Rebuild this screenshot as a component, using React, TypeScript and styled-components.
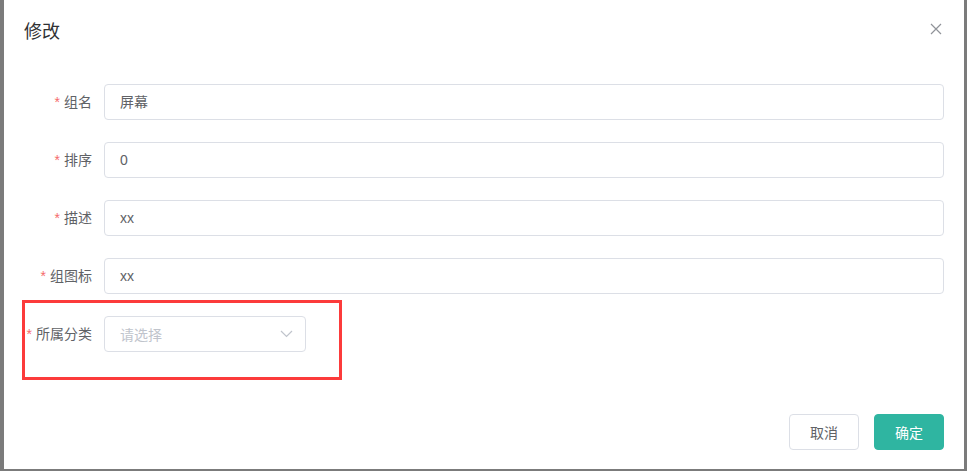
import styled, { createGlobalStyle } from "styled-components"

const GlobalStyle = createGlobalStyle`
    html, body {
        margin: 0;
        padding: 0;
        background: #7b7b7b;
        font-family: "Liberation Sans", "Noto Sans CJK SC", sans-serif;
    }
`

const fields = [
    { label: "组名", value: "屏幕" },
    { label: "排序", value: "0" },
    { label: "描述", value: "xx" },
    { label: "组图标", value: "xx" },
]

function App() {
    return (
        <>
            <GlobalStyle />
            <Overlay>
                <Dialog>
                    <Header>
                        <Title>修改</Title>
                        <CloseButton aria-label="close">
                            <svg width="12" height="12" viewBox="0 0 12 12">
                                <path d="M1 1L11 11M11 1L1 11" stroke="#909399" strokeWidth="1.2" />
                            </svg>
                        </CloseButton>
                    </Header>
                    <Body>
                        {fields.map((f) => (
                            <FormItem key={f.label}>
                                <Label><Star>*</Star>{f.label}</Label>
                                <Input>{f.value}</Input>
                            </FormItem>
                        ))}
                        <FormItem>
                            <Highlight />
                            <Label><Star>*</Star>所属分类</Label>
                            <Select>
                                <Placeholder>请选择</Placeholder>
                                <svg width="13" height="8" viewBox="0 0 13 8">
                                    <path d="M1 1L6.5 6.5L12 1" fill="none" stroke="#c0c4cc" strokeWidth="1.2" />
                                </svg>
                            </Select>
                        </FormItem>
                    </Body>
                    <Footer>
                        <Button>取消</Button>
                        <Button primary>确定</Button>
                    </Footer>
                </Dialog>
            </Overlay>
        </>
    )
}

const Overlay = styled.div`
    padding-left: 4px;
    width: 963px;
    height: 471px;
    box-sizing: border-box;
`

const Dialog = styled.div`
    width: 960px;
    height: 469px;
    background: #fff;
    display: flex;
    flex-direction: column;
`

const Header = styled.div`
    position: relative;
    padding: 20px 20px 10px;
`

const Title = styled.span`
    font-size: 18px;
    line-height: 24px;
    color: #303133;
`

const CloseButton = styled.button`
    position: absolute;
    top: 23px;
    right: 22px;
    padding: 0;
    border: none;
    background: none;
    display: flex;
`

const Body = styled.div`
    padding: 30px 20px;
`

const FormItem = styled.div`
    position: relative;
    display: flex;
    align-items: center;
    margin-bottom: 22px;
    &:last-child {
        margin-bottom: 0;
    }
`

const Highlight = styled.div`
    position: absolute;
    left: -2px;
    top: -16px;
    width: 320px;
    height: 80px;
    box-sizing: border-box;
    border: 3px solid #fc3b3b;
    pointer-events: none;
`

const Label = styled.label`
    width: 80px;
    padding-right: 12px;
    box-sizing: border-box;
    text-align: right;
    font-size: 14px;
    line-height: 36px;
    color: #606266;
`

const Star = styled.span`
    color: #f56c6c;
    margin-right: 4px;
`

const Input = styled.div`
    flex: 1;
    height: 36px;
    box-sizing: border-box;
    border: 1px solid #dcdfe6;
    border-radius: 4px;
    padding: 0 15px;
    font-size: 14px;
    line-height: 34px;
    color: #606266;
`

const Select = styled.div`
    width: 202px;
    height: 36px;
    box-sizing: border-box;
    border: 1px solid #dcdfe6;
    border-radius: 4px;
    padding: 0 12px 0 15px;
    display: flex;
    align-items: center;
    justify-content: space-between;
`

const Placeholder = styled.span`
    font-size: 14px;
    color: #c0c4cc;
`

const Footer = styled.div`
    margin-top: auto;
    display: flex;
    justify-content: flex-end;
    gap: 15px;
    padding: 10px 20px 19px;
`

const Button = styled.button<{ primary?: boolean }>`
    height: 36px;
    padding: 0 20px;
    border-radius: 4px;
    font-family: inherit;
    font-size: 14px;
    border: 1px solid ${(p) => (p.primary ? "#2fb5a1" : "#dcdfe6")};
    background: ${(p) => (p.primary ? "#2fb5a1" : "#fff")};
    color: ${(p) => (p.primary ? "#fff" : "#606266")};
`

export default App
